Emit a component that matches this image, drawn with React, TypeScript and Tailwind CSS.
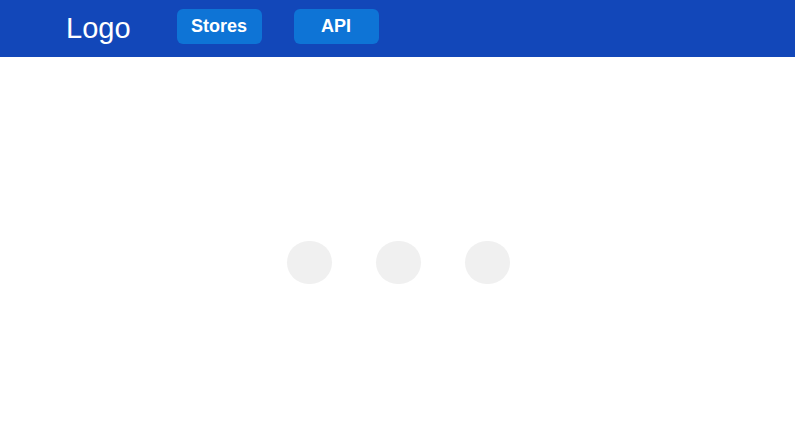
const Dot = () => <div className="h-[43px] w-[45px] rounded-full bg-[#f0f0f0]" />;

export default function App() {
	return (
		<div className="min-h-screen bg-white font-['Liberation_Sans',Arial,sans-serif]">
			<header className="flex h-[57px] items-center bg-[#1247b9] pl-[66px]">
				<span className="text-[29px] leading-none text-white">Logo</span>
				<nav className="ml-[46px] flex gap-[32px] self-start pt-[9px]">
					<button className="h-[35px] w-[85px] rounded-[6px] bg-[#0e74d6] text-[18px] font-bold text-white">
						Stores
					</button>
					<button className="h-[35px] w-[85px] rounded-[6px] bg-[#0e74d6] text-[18px] font-bold text-white">
						API
					</button>
				</nav>
			</header>
			<main className="flex justify-center gap-[44px] pl-[2px] pt-[184px]">
				<Dot />
				<Dot />
				<Dot />
			</main>
		</div>
	);
}
